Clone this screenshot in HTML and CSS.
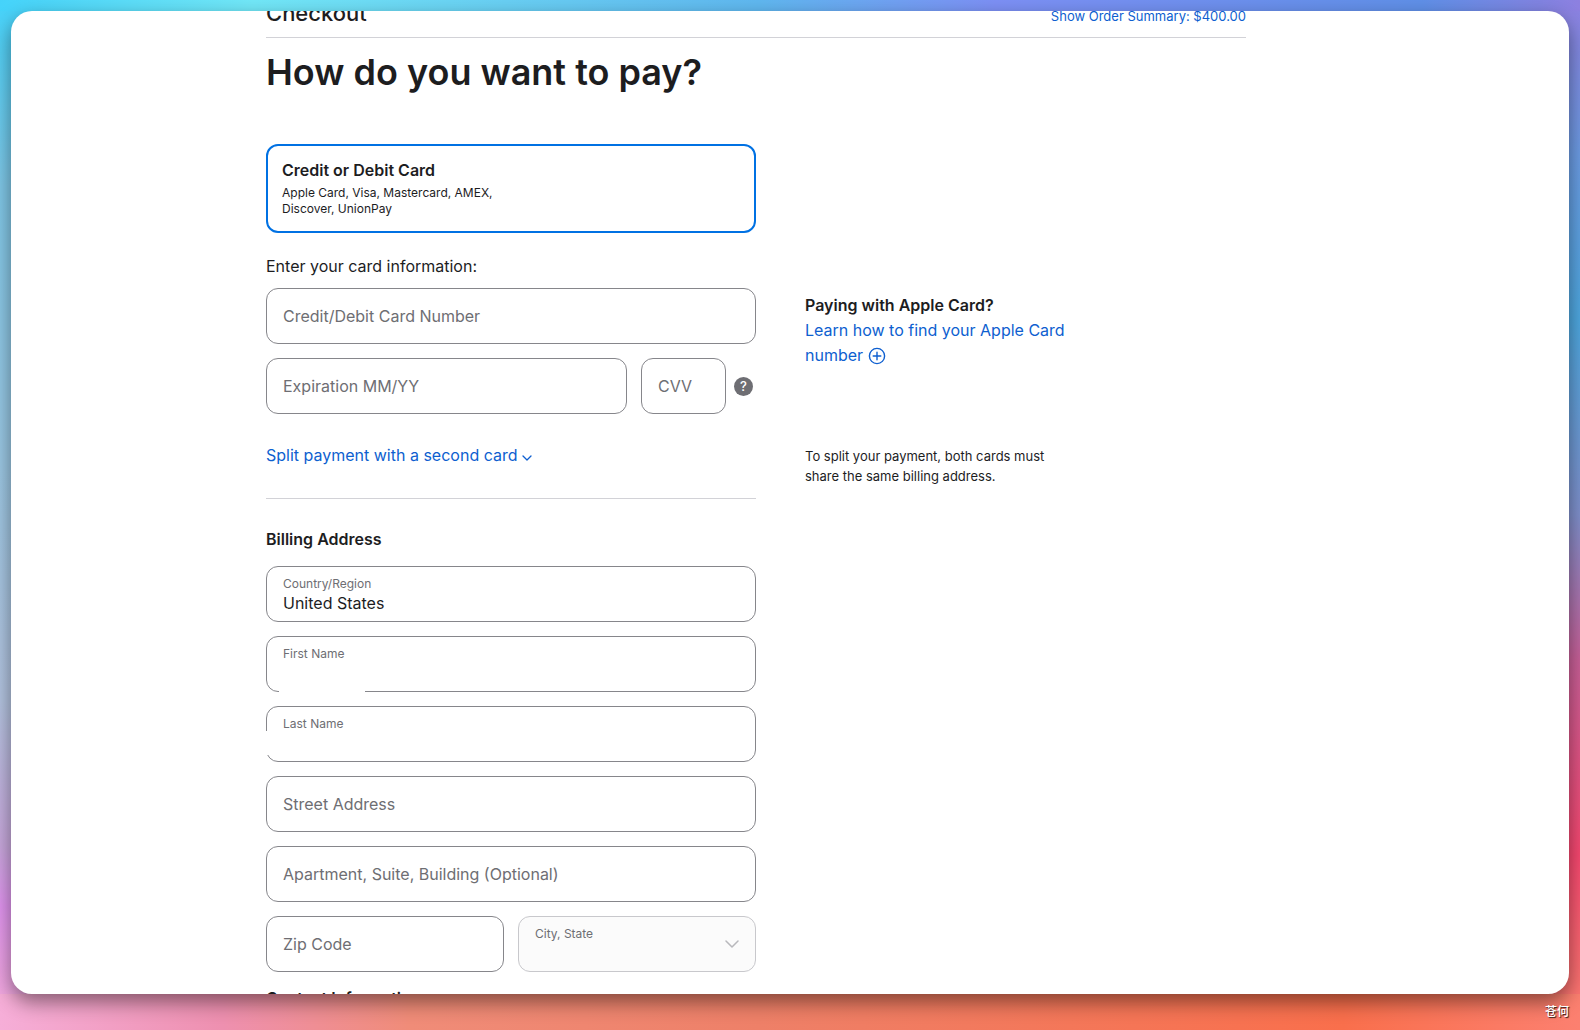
FILE: index.html
```html
<!DOCTYPE html>
<html lang="en">
<head>
<meta charset="utf-8">
<title>Checkout</title>
<link rel="stylesheet" href="styles.css">
</head>
<body class="desktop">
<main class="window">
  <div class="page">
    <header class="topbar">
      <span class="topbar-title">Checkout</span>
      <a class="link summary" href="#summary">Show Order Summary: $400.00</a>
    </header>
    <h1 class="headline">How do you want to pay?</h1>
    <form class="columns">
      <div class="main-col">
        <button type="button" class="method">
          <span class="method-title">Credit or Debit Card</span>
          <span class="method-note">Apple Card, Visa, Mastercard, AMEX, Discover, UnionPay</span>
        </button>
        <p class="intro">Enter your card information:</p>
        <div class="fields">
          <div class="field"><input class="input" type="text" placeholder="Credit/Debit Card Number" aria-label="Credit/Debit Card Number"></div>
          <div class="row">
            <div class="field"><input class="input" type="text" placeholder="Expiration MM/YY" aria-label="Expiration MM/YY"></div>
            <div class="cvv">
              <input class="input" type="text" placeholder="CVV" aria-label="CVV">
              <button type="button" class="help" aria-label="About the CVV">?</button>
            </div>
          </div>
        </div>
        <div class="split">
          <a class="link" href="#split">Split payment with a second card
            <svg class="chevron" viewBox="0 0 10 6" width="10" height="6"><path d="M1 1l4 4 4-4"/></svg></a>
        </div>
        <h2 class="section-title">Billing Address</h2>
        <div class="fields">
          <div class="field labelled">
            <label class="label" for="country">Country/Region</label>
            <input class="input" id="country" type="text" value="United States">
          </div>
          <div class="field labelled masked-bottom">
            <label class="label" for="first">First Name</label>
            <input class="input" id="first" type="text">
          </div>
          <div class="field labelled masked-left">
            <label class="label" for="last">Last Name</label>
            <input class="input" id="last" type="text">
          </div>
          <div class="field"><input class="input" type="text" placeholder="Street Address" aria-label="Street Address"></div>
          <div class="field"><input class="input" type="text" placeholder="Apartment, Suite, Building (Optional)" aria-label="Apartment, Suite, Building (Optional)"></div>
          <div class="row">
            <div class="field"><input class="input" type="text" placeholder="Zip Code" aria-label="Zip Code"></div>
            <div class="field labelled">
              <label class="label" for="city">City, State</label>
              <select class="input" id="city" disabled><option></option></select>
              <svg class="select-arrow" viewBox="0 0 14 8" width="14" height="8"><path d="M1 1l6 6 6-6"/></svg>
            </div>
          </div>
        </div>
        <h2 class="section-title contact">Contact Information</h2>
      </div>
      <aside class="side-col">
        <h2 class="side-title">Paying with Apple Card?</h2>
        <a class="link side-link" href="#number">Learn how to find your Apple Card number
          <svg class="plus" viewBox="0 0 18 18" width="18" height="18"><circle cx="9" cy="9" r="7.6"/><path d="M9 5.2v7.6M5.2 9h7.6"/></svg></a>
        <p class="side-note">To split your payment, both cards must share the same billing address.</p>
      </aside>
    </form>
  </div>
</main>
<div class="signature" lang="zh">苍何</div>
</body>
</html>
```
FILE: styles.css
```css
* { box-sizing: border-box; }

body, h1, h2, p { margin: 0; }

.desktop {
  position: relative;
  height: 100vh;
  padding: 11px 11px 36px;
  overflow: hidden;
  font-family: Inter, "Liberation Sans", "Noto Sans CJK SC", sans-serif;
  font-size: 16px;
  line-height: 25px;
  color: #1d1d1f;
  background:
    linear-gradient(to right, #45d3fa 0%, #72e8f8 16%, #60b8f0 48%, #7d90f5 63%, #6090e8 90%, #8d80e0 100%) top / 100% 11px no-repeat,
    linear-gradient(to right, #f6aed8 0%, #ee90b0 14%, #f08c78 26%, #ee8068 48%, #f96f4c 85%, #fc8070 100%) bottom / 100% 36px no-repeat,
    linear-gradient(to bottom, #45d3fa 0%, #80c8e8 18%, #9cc8e4 45%, #b4c4e0 68%, #c8a8dc 82%, #e094ee 88%, #f6aed8 100%) left / 50% 100% no-repeat,
    linear-gradient(to bottom, #8d80e0 0%, #6c9ce4 15%, #4ea8e0 31%, #8090cc 50%, #c86098 64%, #f84870 83%, #fc8070 100%) right / 50% 100% no-repeat;
}

.window {
  height: 100%;
  padding-right: 68px;
  overflow: hidden;
  background: #fff;
  border-radius: 21px;
  box-shadow: 0 8px 20px rgba(0, 0, 0, 0.45);
}

.page {
  max-width: 980px;
  margin: 0 auto;
}

.topbar {
  display: flex;
  justify-content: space-between;
  align-items: baseline;
  height: 52px;
  margin-top: -25px;
  padding-top: 15px;
  border-bottom: 1px solid #d2d2d7;
}

.topbar-title {
  font-size: 22px;
  font-weight: 500;
}

.link {
  color: #0e5fd0;
  text-decoration: none;
}

.summary { font-size: 13px; }

.headline {
  padding-top: 10px;
  font-size: 36px;
  line-height: 48px;
  font-weight: 600;
}

.columns {
  display: grid;
  grid-template-columns: 1fr 1fr;
  margin-top: 48px;
}

.method {
  display: flex;
  flex-direction: column;
  gap: 2px;
  width: 100%;
  padding: 12px 14px 14px;
  font: inherit;
  color: inherit;
  text-align: left;
  background: #fff;
  border: 2px solid #0071e3;
  border-radius: 12px;
}

.method-title { font-weight: 600; }

.method-note {
  max-width: 230px;
  font-size: 12px;
  line-height: 16px;
}

.intro { padding: 21px 0 9px; }

.fields {
  display: grid;
  gap: 14px;
}

.row {
  display: flex;
  gap: 14px;
}

.field {
  position: relative;
  flex: 1;
}

.input {
  display: block;
  width: 100%;
  height: 56px;
  padding: 0 16px;
  font: inherit;
  color: #1d1d1f;
  background: #fff;
  border: 1px solid #86868b;
  border-radius: 12px;
  appearance: none;
}

.input::placeholder { color: #6e6e73; opacity: 1; }

.labelled .input { padding-top: 18px; }

.label {
  position: absolute;
  top: 10px;
  left: 17px;
  font-size: 12px;
  line-height: 16px;
  color: #6e6e73;
}

.input:disabled {
  background: #fbfbfb;
  border-color: #c8c8cc;
  opacity: 1;
}

.masked-bottom::after,
.masked-left::after {
  content: "";
  position: absolute;
  background: #fff;
}

.masked-bottom::after {
  bottom: 0;
  left: 13px;
  width: 86px;
  height: 24px;
}

.masked-left::after {
  top: 25px;
  left: 0;
  width: 80px;
  height: 24px;
}

.cvv {
  display: flex;
  align-items: center;
  gap: 8px;
  width: 115px;
}

.cvv .input { width: 85px; }

.help {
  width: 19px;
  height: 19px;
  padding: 0;
  font: 500 13px/19px Inter, sans-serif;
  color: #fff;
  background: #6e6e73;
  border: 0;
  border-radius: 50%;
}

svg {
  fill: none;
  stroke: currentColor;
  stroke-linecap: round;
  stroke-linejoin: round;
}

.chevron {
  stroke-width: 1.3;
  vertical-align: 0;
}

.select-arrow {
  position: absolute;
  top: 24px;
  right: 17px;
  color: #b8b8bc;
  stroke-width: 1.5;
}

.split {
  padding: 29px 0 30px;
  border-bottom: 1px solid #d2d2d7;
}

.section-title {
  padding: 28px 0 14px;
  font-size: 16px;
  font-weight: 600;
}

.contact { padding-top: 14px; }

.side-col {
  max-width: 320px;
  padding: 149px 0 0 49px;
}

.side-title {
  font-size: 16px;
  font-weight: 600;
}

.side-link { display: block; }

.plus {
  stroke-width: 1.4;
  vertical-align: -4px;
}

.side-note {
  margin-top: 78px;
  font-size: 13px;
  line-height: 20px;
}

.signature {
  position: absolute;
  right: 11px;
  bottom: 10px;
  font-size: 12px;
  line-height: 16px;
  font-weight: 500;
  color: #fff;
  text-shadow: 1px 1px 1px rgba(0, 0, 0, 0.8);
}
```
